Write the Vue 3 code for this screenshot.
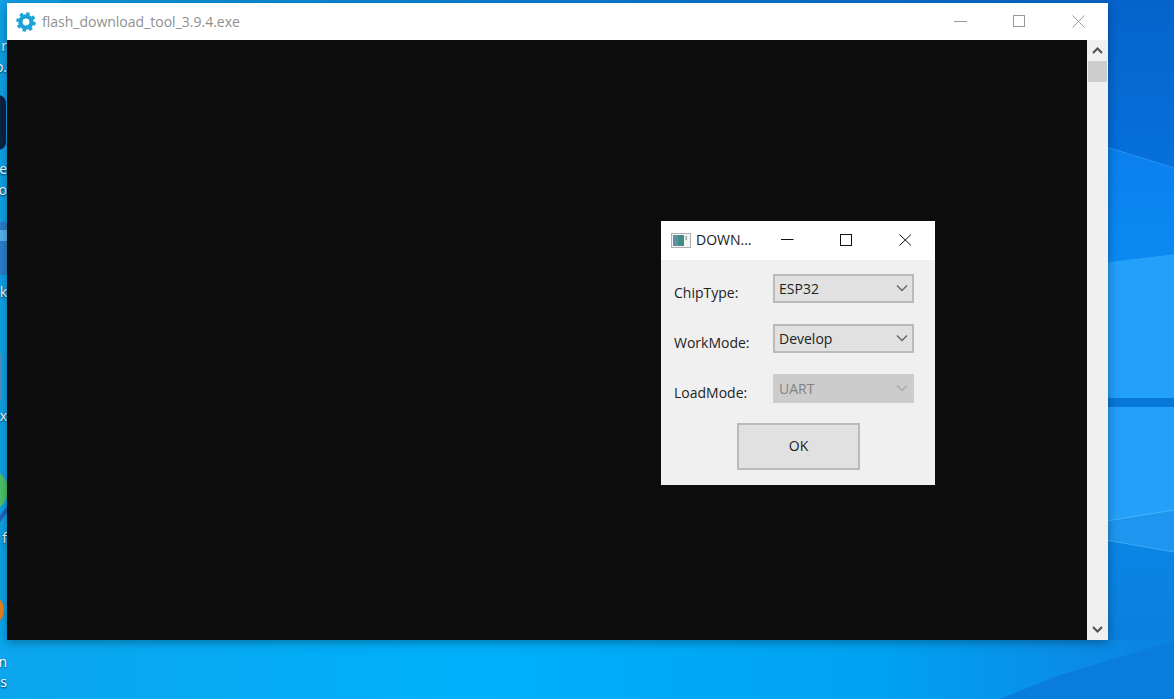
<template>
  <div class="desktop">
    <svg class="wallpaper" width="1174" height="699" viewBox="0 0 1174 699">
      <defs>
        <linearGradient id="floor" x1="0" y1="0" x2="1" y2="0">
          <stop offset="0" stop-color="#0ba6ee" />
          <stop offset="0.4" stop-color="#00b0fa" />
          <stop offset="0.75" stop-color="#00a2f2" />
          <stop offset="0.92" stop-color="#0a8ce6" />
          <stop offset="1" stop-color="#0a82e0" />
        </linearGradient>
        <linearGradient id="top" x1="0" y1="0" x2="1" y2="0">
          <stop offset="0" stop-color="#0c9edf" />
          <stop offset="0.6" stop-color="#0a78d6" />
          <stop offset="1" stop-color="#0464cc" />
        </linearGradient>
        <linearGradient id="paneTop" x1="0" y1="0" x2="0" y2="1">
          <stop offset="0" stop-color="#0564cc" />
          <stop offset="1" stop-color="#0670dc" />
        </linearGradient>
        <linearGradient id="paneMid" x1="0" y1="0" x2="0" y2="1">
          <stop offset="0" stop-color="#0a80ee" />
          <stop offset="1" stop-color="#0a8af2" />
        </linearGradient>
        <linearGradient id="paneLow" x1="0" y1="0" x2="0" y2="1">
          <stop offset="0" stop-color="#0a86e6" />
          <stop offset="1" stop-color="#0a80de" />
        </linearGradient>
      </defs>
      <rect width="1174" height="699" fill="url(#top)" />
      <rect x="0" y="0" width="60" height="699" fill="#10a2e8" />
      <rect x="0" y="620" width="1174" height="79" fill="url(#floor)" />
      <polygon points="1100,0 1174,0 1174,168 1100,145" fill="url(#paneTop)" />
      <polygon points="1100,145 1174,168 1174,254 1100,263" fill="url(#paneMid)" />
      <polygon points="1100,263 1174,254 1174,398 1100,398" fill="#22a0fa" />
      <rect x="1100" y="398" width="74" height="9" fill="#0878d8" />
      <polygon points="1100,407 1174,407 1174,510 1100,522" fill="#22a0fa" />
      <polygon points="1100,522 1174,510 1174,552 1100,539" fill="#1e96f0" />
      <polygon points="1100,539 1174,552 1174,640 1100,640" fill="url(#paneLow)" />
      <line x1="1100" y1="145" x2="1174" y2="168" stroke="#2a90ee" stroke-width="1" />
      <line x1="1100" y1="522" x2="1174" y2="510" stroke="#46b6fc" stroke-width="1" />
      <line x1="1100" y1="539" x2="1174" y2="552" stroke="#3cacf8" stroke-width="1" />
      <polygon points="1174,641 1174,699 1000,699 1060,675" fill="#0a7cdc" />
      <!-- desktop shortcuts, mostly hidden by the window -->
      <rect x="-40" y="95" width="46" height="55" rx="8" fill="#0b2344" />
      <rect x="-40" y="222" width="47" height="53" rx="2" fill="#2a80cc" />
      <rect x="-40" y="230" width="47" height="11" fill="#52b8f0" />
      <rect x="-40" y="353" width="42" height="48" rx="3" fill="#4f8fb8" />
      <circle cx="-14" cy="490" r="22" fill="#4cc46a" />
      <polygon points="0,515 8,505 8,512 0,522" fill="#1d68c0" />
      <circle cx="-12" cy="610" r="16" fill="#e8821e" />
    </svg>

    <div v-for="l in deskLabels" :key="l.top" class="desk-label" :style="{ top: l.top + 'px' }">{{ l.text }}</div>

    <div class="window">
      <div class="titlebar">
        <svg class="gear" width="20" height="20" viewBox="0 0 20 20">
          <circle cx="10" cy="10" r="5.6" fill="none" stroke="#1ba3d8" stroke-width="4.4" />
          <circle cx="10" cy="10" r="8.3" fill="none" stroke="#1ba3d8" stroke-width="3" stroke-dasharray="3.3 3.22" />
        </svg>
        <span class="title">flash_download_tool_3.9.4.exe</span>
        <div class="controls">
          <button class="ctl"><svg width="14" height="14" viewBox="0 0 14 14"><path d="M0 6.5h13" stroke="#999" fill="none" /></svg></button>
          <button class="ctl"><svg width="14" height="14" viewBox="0 0 14 14"><rect x="0.5" y="0.5" width="11" height="11" stroke="#999" fill="none" /></svg></button>
          <button class="ctl"><svg width="14" height="14" viewBox="0 0 14 14"><path d="M0.5 0.5l12 12M12.5 0.5l-12 12" stroke="#999" fill="none" /></svg></button>
        </div>
      </div>
      <div class="content">
        <div class="console"></div>
        <div class="scrollbar">
          <svg width="21" height="21" viewBox="0 0 21 21"><path d="M6 13l4.5-4.5 4.5 4.5" stroke="#505050" stroke-width="2" fill="none" /></svg>
          <div class="thumb"></div>
          <svg class="down" width="21" height="21" viewBox="0 0 21 21"><path d="M6 8l4.5 4.5 4.5-4.5" stroke="#505050" stroke-width="2" fill="none" /></svg>
        </div>
      </div>
    </div>

    <div class="dialog">
      <div class="dlg-title">
        <svg class="dlg-icon" width="20" height="15" viewBox="0 0 20 15">
          <rect x="0.5" y="0.5" width="19" height="14" fill="#f4f4f4" stroke="#b0b0b0" />
          <rect x="2" y="2" width="11" height="11" fill="#3f9080" />
          <rect x="2" y="2" width="5" height="11" fill="#5f8fa8" />
          <rect x="14.5" y="3" width="1.5" height="4" fill="#9aa8a8" />
        </svg>
        <span class="dlg-name">DOWN...</span>
        <div class="dlg-controls">
          <svg width="13" height="13" viewBox="0 0 13 13"><path d="M0 5.5h12.5" stroke="#111" fill="none" /></svg>
          <svg width="13" height="13" viewBox="0 0 13 13"><rect x="0.5" y="0.5" width="11" height="11" stroke="#111" fill="none" /></svg>
          <svg width="13" height="13" viewBox="0 0 13 13"><path d="M0.5 0.5l11.5 11M12 0.5l-11.5 11" stroke="#111" fill="none" /></svg>
        </div>
      </div>
      <div class="dlg-body">
        <div v-for="f in fields" :key="f.label" class="row">
          <label class="lbl">{{ f.label }}</label>
          <div class="combo" :class="{ disabled: f.disabled }">
            <span>{{ f.value }}</span>
            <svg width="12" height="8" viewBox="0 0 12 8"><path d="M1 1.5l5 5 5-5" stroke="currentColor" stroke-width="1.4" fill="none" /></svg>
          </div>
        </div>
        <button class="ok">OK</button>
      </div>
    </div>
  </div>
</template>

<script setup>
const fields = [
  { label: 'ChipType:', value: 'ESP32' },
  { label: 'WorkMode:', value: 'Develop' },
  { label: 'LoadMode:', value: 'UART', disabled: true },
]

const deskLabels = [
  { top: 37, text: 'r' },
  { top: 58, text: 'o.' },
  { top: 160, text: 'e' },
  { top: 181, text: 'o' },
  { top: 283, text: 'k' },
  { top: 407, text: 'x' },
  { top: 529, text: 'f' },
  { top: 653, text: 'n' },
  { top: 673, text: 's' },
]
</script>

<style>
html, body { margin: 0; overflow: hidden; }
</style>

<style scoped>
.desktop {
  position: relative; width: 1174px; height: 699px; overflow: hidden;
  font-family: "Open Sans", "Noto Sans", sans-serif;
}
.wallpaper { position: absolute; inset: 0; display: block; }
.desk-label {
  position: absolute; right: 1167px; color: #fff; font-size: 14px; line-height: 18px; white-space: nowrap;
  text-shadow: 0 1px 2px rgba(0,0,0,.75);
}

.window {
  position: absolute; left: 7px; top: 3px; width: 1101px; height: 637px;
  display: flex; flex-direction: column; background: #fff;
  box-shadow: 0 2px 10px rgba(0,0,0,.35);
}
.titlebar { height: 37px; display: flex; align-items: center; padding-left: 9px; flex: none; }
.gear { flex: none; }
.title { margin-left: 6px; font-size: 14px; color: #8f8f8f; }
.controls { margin-left: auto; display: flex; }
.ctl {
  width: 59px; height: 37px; padding: 0; border: 0; background: none;
  display: flex; align-items: center; justify-content: center;
}
.content { flex: 1; display: flex; min-height: 0; }
.console { flex: 1; background: #0c0c0c; }
.scrollbar { width: 21px; background: #f0f0f0; display: flex; flex-direction: column; align-items: center; }
.scrollbar svg { display: block; flex: none; }
.thumb { width: 19px; height: 21px; background: #cdcdcd; }
.down { margin-top: auto; }

.dialog {
  position: absolute; left: 661px; top: 221px; width: 274px; height: 264px;
  background: #f0f0f0; font-size: 14px; color: #222;
}
.dlg-title { height: 39px; background: #fff; display: flex; align-items: center; padding-left: 10px; }
.dlg-icon { flex: none; margin-top: -1px; }
.dlg-name { margin: -2px 0 0 5px; width: 70px; color: #1a1a1a; white-space: nowrap; }
.dlg-controls { display: flex; gap: 46px; margin: -1px 0 0 15px; }
.dlg-body { padding: 14px 0 0 13px; display: flex; flex-direction: column; gap: 21px; }
.row { display: flex; height: 29px; }
.lbl { width: 100px; padding-top: 9px; line-height: 20px; }
.combo {
  box-sizing: border-box; width: 141px; height: 29px; margin-left: -1px; padding: 0 4px 1px 4px;
  display: flex; align-items: center; justify-content: space-between;
  background: #e1e1e1; border: 2px solid #bababa; color: #222;
}
.combo svg { color: #666; }
.combo.disabled { background: #ccc; border-color: #ccc; color: #838383; }
.combo.disabled svg { color: #a8a8a8; }
.ok {
  box-sizing: border-box; width: 123px; height: 47px; margin: -1px 0 0 63px;
  background: #e1e1e1; border: 2px solid #bababa; padding: 0 0 2px;
  font: inherit; color: #222;
}
</style>
